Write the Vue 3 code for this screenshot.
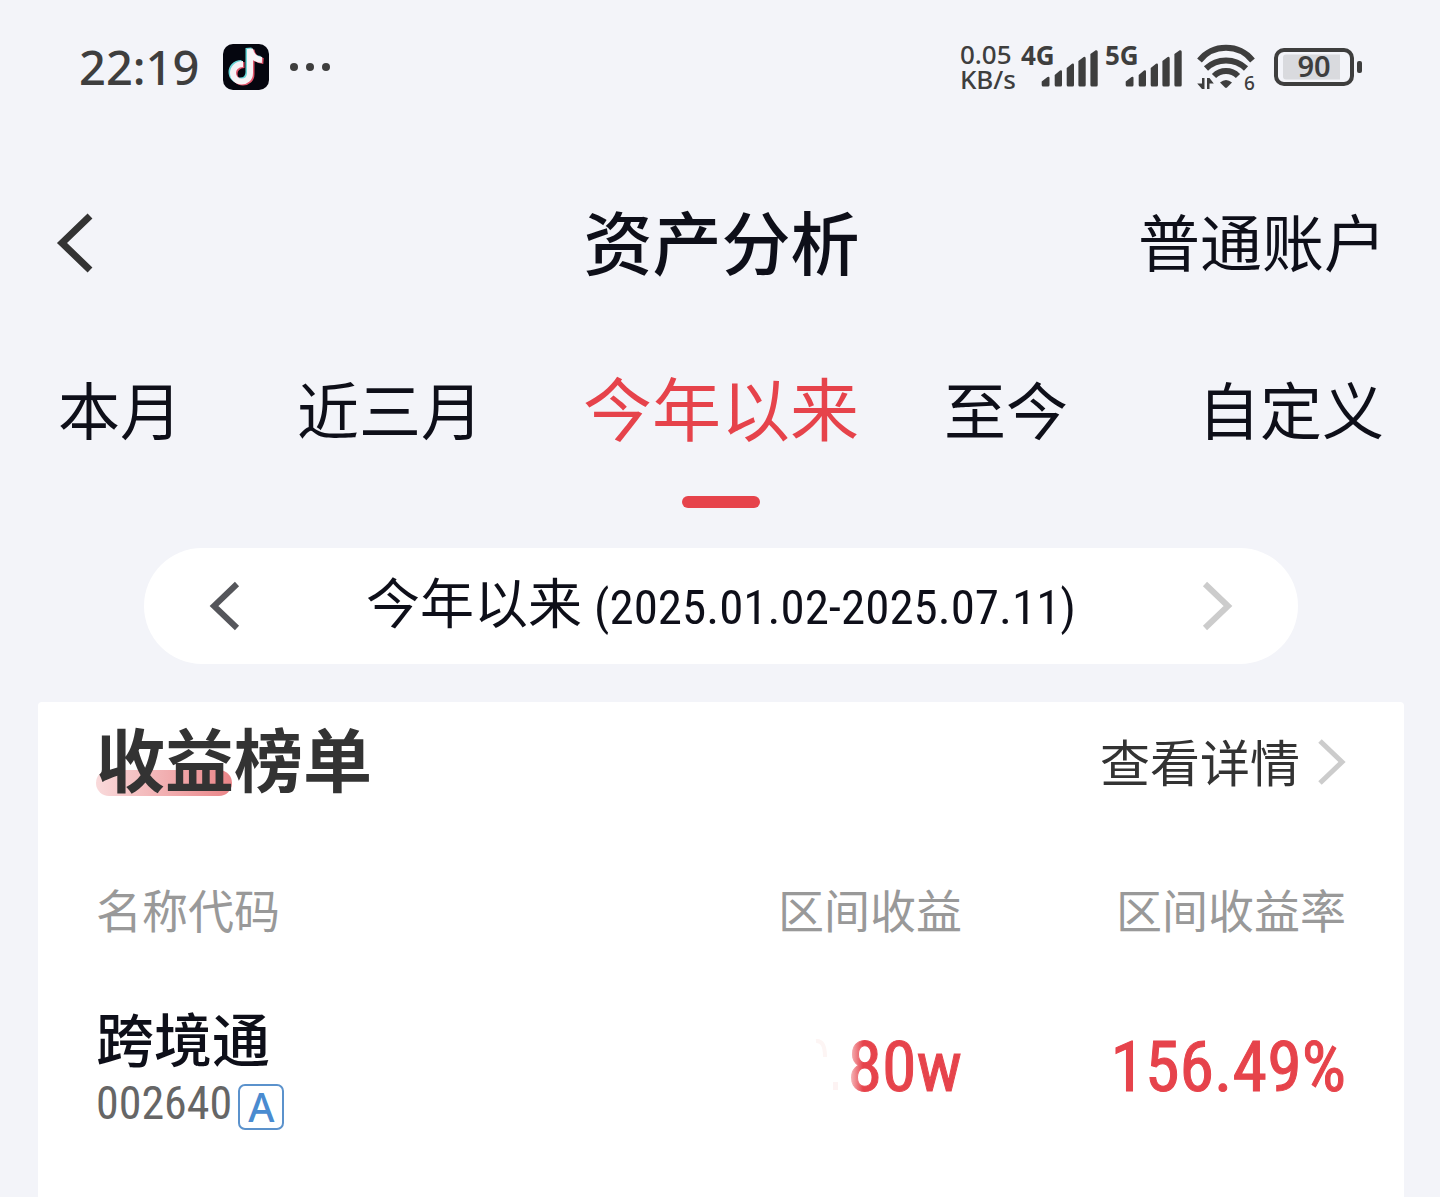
<template>
  <div class="asset-page">
    <div class="status-bar">
      <div class="status-left">
        <span class="clock">22:19</span>
        <svg class="app-icon" viewBox="0 0 46 46">
          <rect width="46" height="46" rx="10" fill="#05060f" />
          <g fill="none" stroke-width="6">
            <g stroke="#69d6d8" transform="translate(-1.5 -1)">
              <path :d="notePath" />
            </g>
            <g stroke="#e0546a" transform="translate(1.5 1)">
              <path :d="notePath" />
            </g>
            <path stroke="#f6f3f6" :d="notePath" />
          </g>
        </svg>
        <svg class="more-icon" viewBox="0 0 42 10">
          <circle v-for="x in [5, 21, 37]" :key="x" :cx="x" cy="5" r="4" fill="#3e3e3e" />
        </svg>
      </div>

      <div class="status-right">
        <div class="net-speed">
          <span>0.05</span>
          <span>KB/s</span>
        </div>
        <svg v-for="net in networks" :key="net" class="signal" viewBox="0 0 80 48">
          <text x="1" y="22" class="net-type">{{ net }}</text>
          <path
            d="M21.7 38.5L27.5 34Q29.5 33.2 29.5 35V42Q29.5 43.5 28 43.5H23.2Q21.7 43.5 21.7 42Z
               M34.7 32L40 27.4Q42 26.8 42 28.5V42Q42 43.5 40.5 43.5H36.2Q34.7 43.5 34.7 42Z
               M46.7 25L52 20.7Q54 20 54 22V42Q54 43.5 52.5 43.5H48.2Q46.7 43.5 46.7 42Z
               M58.4 18L63.7 14Q65.7 13.4 65.7 15.4V42Q65.7 43.5 64.2 43.5H59.9Q58.4 43.5 58.4 42Z
               M70.4 11L75.7 7.3Q77.7 6.8 77.7 8.8V42Q77.7 43.5 76.2 43.5H71.9Q70.4 43.5 70.4 42Z"
          />
        </svg>
        <svg class="wifi" viewBox="0 0 60 50">
          <g fill="none" stroke="#3e3e3e" stroke-width="6">
            <path d="M3.5 18.5A34 34 0 0 1 56.5 18.5" />
            <path d="M10 26.5A29 29 0 0 1 50 26.5" />
            <path d="M18 34A17 17 0 0 1 42 34" />
          </g>
          <path d="M24 40.5Q30 35.5 36 40.5L31 45.5Q30 46.3 29 45.5Z" />
          <path d="M6 36H8.5V47H6L1.2 41.5H6Z" />
          <path d="M13.5 47H11V36H13.5L17.8 41.5H13.5Z" />
          <text x="48" y="48" class="wifi-gen">6</text>
        </svg>
        <svg class="battery" viewBox="0 0 88 38">
          <rect x="2" y="2" width="76" height="34" rx="8" fill="none" stroke="#3e3e3e" stroke-width="4" />
          <path d="M12 6.5H66V31.5H12Q9 31.5 9 28.5V9.5Q9 6.5 12 6.5Z" class="level" />
          <rect x="83" y="13" width="5" height="12" rx="2" />
          <text x="40" y="29" class="level-text">90</text>
        </svg>
      </div>
    </div>

    <header class="nav-bar">
      <button class="icon-btn back" aria-label="返回">
        <svg width="36" height="58" viewBox="0 0 36 58">
          <path d="M33 2L5 29L33 56" fill="none" stroke="#333" stroke-width="7" />
        </svg>
      </button>
      <h1>资产分析</h1>
      <button class="account">普通账户</button>
    </header>

    <nav class="tabs" role="tablist">
      <button
        v-for="tab in tabs"
        :key="tab"
        role="tab"
        :aria-selected="activeTab === tab"
        :class="['tab', { active: activeTab === tab }]"
        @click="activeTab = tab"
      >
        {{ tab }}
      </button>
    </nav>

    <div class="range-picker">
      <button class="icon-btn" aria-label="上一区间">
        <svg width="30" height="48" viewBox="0 0 30 48">
          <path d="M27 2L4 24L27 46" fill="none" stroke="#55565b" stroke-width="6" />
        </svg>
      </button>
      <p class="range-text">今年以来 <span class="num">(2025.01.02-2025.07.11)</span></p>
      <button class="icon-btn" aria-label="下一区间" disabled>
        <svg width="30" height="48" viewBox="0 0 30 48">
          <path d="M3 2L26 24L3 46" fill="none" stroke="#ccc" stroke-width="6" />
        </svg>
      </button>
    </div>

    <section class="card">
      <div class="card-head">
        <h2>收益榜单</h2>
        <a href="#" class="detail-link">
          <span>查看详情</span>
          <svg width="28" height="46" viewBox="0 0 28 46">
            <path d="M2 2L24 23L2 44" fill="none" stroke="#ccc" stroke-width="5" />
          </svg>
        </a>
      </div>

      <table class="rank-table">
        <thead>
          <tr>
            <th>名称代码</th>
            <th>区间收益</th>
            <th>区间收益率</th>
          </tr>
        </thead>
        <tbody>
          <tr v-for="item in ranking" :key="item.code">
            <td>
              <div class="stock-name">{{ item.name }}</div>
              <div class="stock-code">
                <span class="num">{{ item.code }}</span>
                <span class="market">{{ item.market }}</span>
              </div>
            </td>
            <td class="value num">
              <svg class="smudge" width="30" height="52" viewBox="0 0 30 52">
                <path d="M5 2Q14 1 14 18" fill="none" stroke="#fdf5f4" stroke-width="4" />
                <rect x="22" y="43" width="5" height="8" fill="#fdf3f3" />
              </svg>
              <span class="faded">{{ item.profit }}</span>
            </td>
            <td class="value num">{{ item.rate }}</td>
          </tr>
        </tbody>
      </table>
    </section>
  </div>
</template>

<script setup>
import { ref } from 'vue'

const notePath = 'M20 20C13 20 10 25 10 29C10 34 14 37.5 18.5 37.5C23 37.5 27 34.5 27 29V5C28 12 32 15.5 39 16'

const networks = ['4G', '5G']

const tabs = ['本月', '近三月', '今年以来', '至今', '自定义']
const activeTab = ref('今年以来')

const ranking = [
  { name: '跨境通', code: '002640', market: 'A', profit: '80w', rate: '156.49%' }
]
</script>

<style>
body {
  background: #f3f4f9;
}
</style>

<style scoped>
.asset-page {
  display: flex;
  flex-direction: column;
  min-height: 100vh;
  background: #f3f4f9;
  color: #0e0f19;
  font-family: "Noto Sans CJK SC", sans-serif;
}

button {
  padding: 0;
  border: none;
  background: none;
  color: inherit;
  font: inherit;
  cursor: pointer;
}

h1,
h2,
p {
  margin: 0;
}

svg {
  display: block;
  flex: none;
  overflow: visible;
}

.num {
  font-family: "Roboto Condensed", Roboto, "Noto Sans CJK SC", sans-serif;
}

/* status bar */
.status-bar {
  display: flex;
  justify-content: space-between;
  align-items: center;
  height: 134px;
  padding: 0 78px 0 79px;
  color: #3e3e3e;
  fill: #3e3e3e;
  font-family: "Noto Sans", sans-serif;
}

.status-left,
.status-right {
  display: flex;
  align-items: center;
}

.clock {
  font-size: 47px;
  font-weight: 500;
  line-height: 48px;
}

.app-icon {
  width: 46px;
  height: 46px;
  margin-left: 24px;
}

.more-icon {
  width: 42px;
  height: 10px;
  margin-left: 20px;
}

.net-speed {
  display: flex;
  flex-direction: column;
  font-size: 26px;
  font-weight: 500;
  line-height: 25px;
}

.signal {
  width: 80px;
  height: 48px;
  margin-left: 4px;
}

.net-type {
  font-size: 26px;
  font-weight: 700;
}

.wifi {
  width: 60px;
  height: 50px;
  margin-left: 12px;
}

.wifi-gen {
  font-size: 19px;
  font-weight: 500;
}

.battery {
  width: 88px;
  height: 38px;
  margin-left: 18px;
}

.level {
  fill: #d9dade;
}

.level-text {
  font-size: 29px;
  font-weight: 600;
  text-anchor: middle;
}

/* title row */
.nav-bar {
  display: grid;
  grid-template-columns: 1fr auto 1fr;
  align-items: center;
  height: 218px;
  padding: 0 54px 0 57px;
}

.back {
  justify-self: start;
}

.nav-bar h1 {
  padding-bottom: 6px;
  font-size: 69px;
  font-weight: 500;
  line-height: 80px;
}

.account {
  justify-self: end;
  padding-bottom: 6px;
  font-size: 62px;
  line-height: 80px;
}

/* period tabs */
.tabs {
  display: grid;
  grid-template-columns: 224fr 332fr 330fr 240fr 314fr;
  height: 156px;
}

.tab {
  display: flex;
  flex-direction: column;
  align-items: center;
  padding-top: 16px;
  font-size: 62px;
  line-height: 80px;
  white-space: nowrap;
}

.tab:first-child {
  align-items: flex-start;
  padding-left: 58px;
}

.tab:last-child {
  align-items: flex-end;
  padding-right: 56px;
}

.tab.active {
  color: #e6434b;
  font-size: 69px;
  line-height: 76px;
}

.tab.active::after {
  content: "";
  width: 78px;
  height: 12px;
  margin-top: 52px;
  border-radius: 6px;
  background: #e6434b;
}

/* date range */
.range-picker {
  display: flex;
  justify-content: space-between;
  align-items: center;
  height: 116px;
  margin: 40px 142px 38px 144px;
  padding: 0 66px;
  border-radius: 58px;
  background: #fff;
}

.range-text {
  padding-bottom: 4px;
  font-size: 54px;
  line-height: 80px;
  white-space: nowrap;
}

.range-text .num {
  font-size: 49px;
}

/* ranking card */
.card {
  flex: 1;
  margin: 0 36px 0 38px;
  padding: 20px 58px 0;
  border-radius: 4px 4px 0 0;
  background: #fff;
}

.card-head {
  display: flex;
  justify-content: space-between;
  align-items: center;
}

.card-head h2 {
  position: relative;
  z-index: 0;
  padding-bottom: 10px;
  color: #333;
  font-size: 69px;
  font-weight: 700;
  line-height: 70px;
}

.card-head h2::before {
  content: "";
  position: absolute;
  z-index: -1;
  left: 0;
  bottom: 6px;
  width: 136px;
  height: 26px;
  border-radius: 13px;
  background: linear-gradient(90deg, #f9dadb, #ea8588);
}

.detail-link {
  display: flex;
  align-items: center;
  gap: 18px;
  color: #333;
  font-size: 50px;
  line-height: 76px;
  text-decoration: none;
}

.detail-link span {
  padding-bottom: 4px;
}

.rank-table {
  width: 100%;
  margin-top: 66px;
  border-collapse: collapse;
}

.rank-table th,
.rank-table td {
  padding: 0;
  text-align: right;
}

.rank-table th:first-child,
.rank-table td:first-child {
  text-align: left;
}

.rank-table th:nth-child(2) {
  width: 400px;
}

.rank-table th:last-child {
  width: 384px;
}

.rank-table th {
  color: #999;
  font-size: 46px;
  font-weight: 400;
  line-height: 80px;
}

.rank-table td {
  padding-top: 50px;
}

.stock-name {
  font-size: 58px;
  font-weight: 500;
  line-height: 78px;
}

.stock-code {
  display: flex;
  align-items: flex-end;
  gap: 6px;
  padding-bottom: 6px;
  color: #666;
  font-size: 46px;
  line-height: 54px;
}

.market {
  box-sizing: border-box;
  width: 46px;
  height: 46px;
  border: 2px solid #5b92cc;
  border-radius: 7px;
  color: #4a8bd0;
  font-family: "Noto Sans", sans-serif;
  font-size: 40px;
  font-weight: 500;
  line-height: 42px;
  text-align: center;
}

.rank-table .value {
  color: #e6434b;
  font-size: 70px;
  line-height: 80px;
  white-space: nowrap;
  -webkit-text-stroke: 1px currentColor;
}

.smudge {
  display: inline-block;
  margin-right: -10px;
}

.faded {
  display: inline-block;
  padding-left: 16px;
  background: linear-gradient(90deg, #fff 12px, #e6434b 32px);
  background-clip: text;
  color: transparent;
}
</style>
